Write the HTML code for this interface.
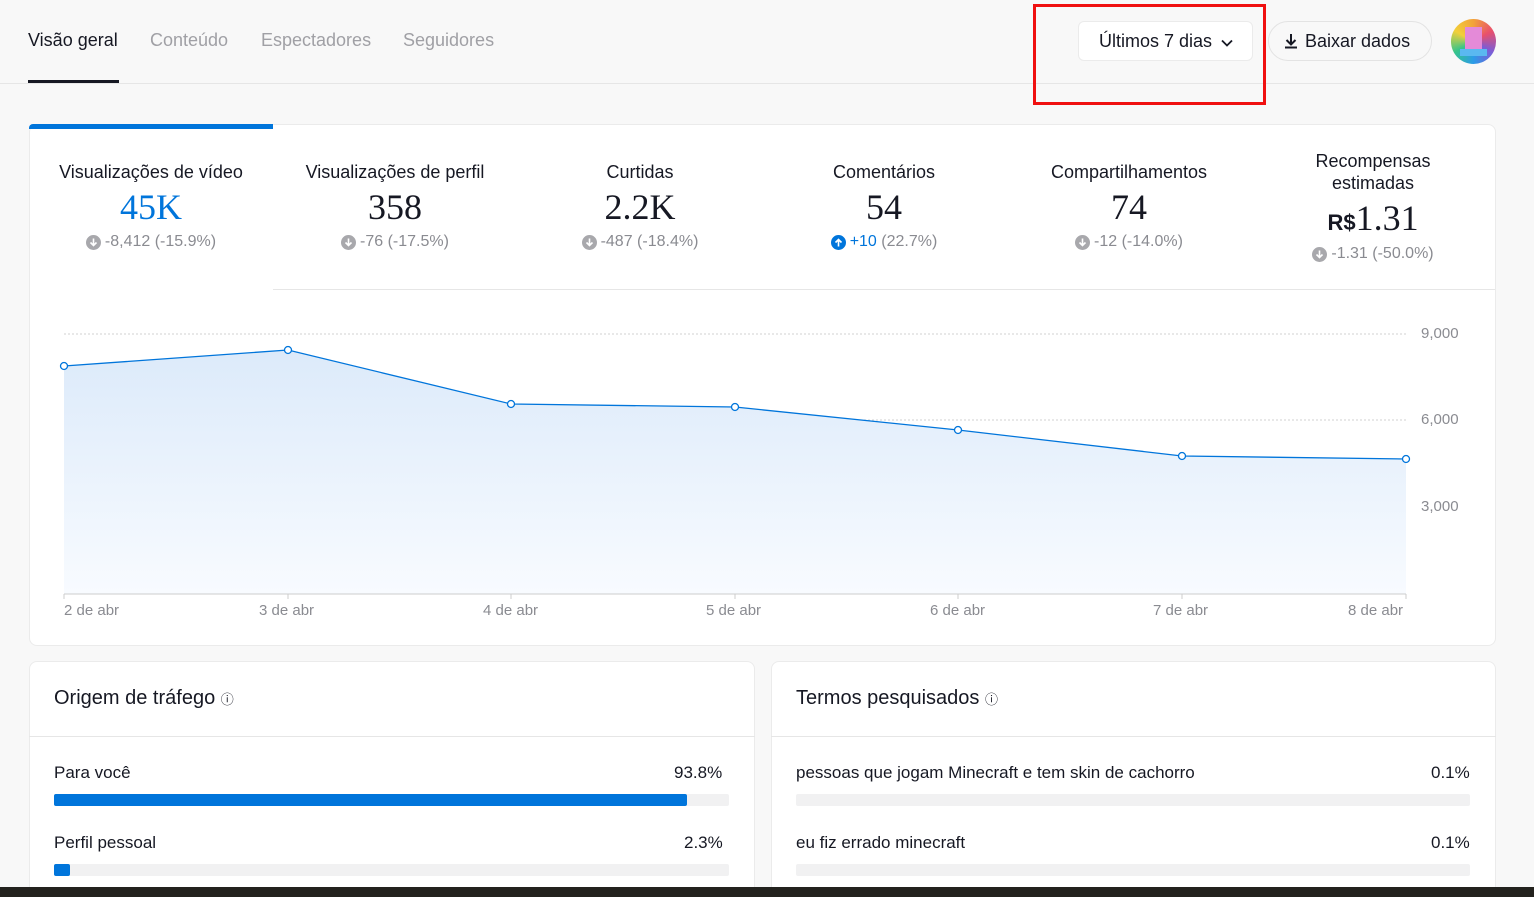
<!DOCTYPE html>
<html><head><meta charset="utf-8"><style>
*{box-sizing:border-box;margin:0;padding:0}
html,body{width:1534px;height:897px;overflow:hidden}
body{background:#f8f8f8;font-family:"Liberation Sans",sans-serif;color:#161823;position:relative}
.abs{position:absolute}
.tab{position:absolute;top:30px;font-size:18px;color:#a0a0a5}
.card{position:absolute;background:#fff;border:1px solid #ebebeb;border-radius:8px}
.m{position:absolute;text-align:center;width:244px}
.m .t{font-size:18px;color:#161823}
.m .v{font-family:"Liberation Serif",serif;font-size:36px;margin-top:4px;line-height:40px}
.m .d{font-size:16px;color:#8a8b91;margin-top:6px;display:flex;justify-content:center;align-items:center}
.ic{display:inline-block;width:15px;height:15px;border-radius:50%;background:#a8a8ac;margin-right:4px;position:relative}
.ic svg{position:absolute;left:0;top:0}
.xl{position:absolute;top:602px;font-size:15px;color:#8a8b91}
.yl{position:absolute;left:1421px;font-size:15px;color:#8a8b91}
.row{position:absolute;font-size:17px}
.bar{position:absolute;height:12px;background:#f1f1f2;border-radius:2px}
.bar i{display:block;height:12px;background:#0075db;border-radius:2px}
</style></head><body>
<div class="tab" style="left:28px;color:#161823">Visão geral</div>
<div class="tab" style="left:150px">Conteúdo</div>
<div class="tab" style="left:261px">Espectadores</div>
<div class="tab" style="left:403px">Seguidores</div>
<div class="abs" style="left:28px;top:80px;width:91px;height:3px;background:#161823"></div>
<div class="abs" style="left:0;top:83px;width:1534px;height:1px;background:#e6e6e6"></div>

<div class="abs" style="left:1078px;top:21px;width:175px;height:40px;background:#fff;border:1px solid #ebebeb;border-radius:6px;font-size:18px;line-height:38px;padding-left:20px">Últimos 7 dias <svg width="12" height="8" viewBox="0 0 12 8" style="margin-left:4px"><path d="M1 1.5l5 5 5-5" fill="none" stroke="#161823" stroke-width="1.8"/></svg></div>
<div class="abs" style="left:1033px;top:4px;width:233px;height:101px;border:3px solid #f01010"></div>
<div class="abs" style="left:1268px;top:21px;width:164px;height:40px;border:1px solid #e3e3e3;border-radius:20px;font-size:18px;line-height:38px;padding-left:14px"><svg width="16" height="16" viewBox="0 0 16 16" style="vertical-align:-2px;margin-right:6px"><path d="M8 1v10M3.5 7L8 11.5 12.5 7M2 14.5h12" fill="none" stroke="#161823" stroke-width="2"/></svg>Baixar dados</div>
<div class="abs" style="left:1451px;top:19px;width:45px;height:45px;border-radius:50%;overflow:hidden;background:conic-gradient(#f2a23a,#e94f6c,#7c5cd6,#2b9be8,#36c48a,#f2d03a,#f2a23a)"><div style="position:absolute;left:14px;top:8px;width:17px;height:24px;background:#e48ad8"></div><div style="position:absolute;left:9px;top:30px;width:27px;height:7px;background:#5ab8f0"></div></div>

<div class="card" style="left:29px;top:124px;width:1467px;height:522px"></div>
<div class="abs" style="left:29px;top:124px;width:244px;height:5px;background:#0075db;border-radius:4px 0 0 0"></div>
<div class="abs" style="left:273px;top:289px;width:1222px;height:1px;background:#e6e6e6"></div>

<div class="m" style="left:29px;top:162px"><div class="t">Visualizações de vídeo</div><div class="v" style="color:#0075db">45K</div><div class="d"><span class="ic"><svg width="15" height="15"><path d="M7.5 3.5v7M4.5 7.5l3 3 3-3" fill="none" stroke="#fff" stroke-width="1.6"/></svg></span>-8,412 (-15.9%)</div></div>
<div class="m" style="left:273px;top:162px"><div class="t">Visualizações de perfil</div><div class="v">358</div><div class="d"><span class="ic"><svg width="15" height="15"><path d="M7.5 3.5v7M4.5 7.5l3 3 3-3" fill="none" stroke="#fff" stroke-width="1.6"/></svg></span>-76 (-17.5%)</div></div>
<div class="m" style="left:518px;top:162px"><div class="t">Curtidas</div><div class="v">2.2K</div><div class="d"><span class="ic"><svg width="15" height="15"><path d="M7.5 3.5v7M4.5 7.5l3 3 3-3" fill="none" stroke="#fff" stroke-width="1.6"/></svg></span>-487 (-18.4%)</div></div>
<div class="m" style="left:762px;top:162px"><div class="t">Comentários</div><div class="v">54</div><div class="d"><span class="ic" style="background:#0075db"><svg width="15" height="15"><path d="M7.5 11.5v-7M4.5 7.5l3-3 3 3" fill="none" stroke="#fff" stroke-width="1.6"/></svg></span><span style="color:#0075db">+10</span>&nbsp;(22.7%)</div></div>
<div class="m" style="left:1007px;top:162px"><div class="t">Compartilhamentos</div><div class="v">74</div><div class="d"><span class="ic"><svg width="15" height="15"><path d="M7.5 3.5v7M4.5 7.5l3 3 3-3" fill="none" stroke="#fff" stroke-width="1.6"/></svg></span>-12 (-14.0%)</div></div>
<div class="m" style="left:1251px;top:150px"><div class="t" style="line-height:22px">Recompensas<br>estimadas</div><div class="v" style="margin-top:4px"><span style="font-family:'Liberation Sans',sans-serif;font-size:22px;font-weight:bold">R$</span>1.31</div><div class="d" style="margin-top:2px"><span class="ic"><svg width="15" height="15"><path d="M7.5 3.5v7M4.5 7.5l3 3 3-3" fill="none" stroke="#fff" stroke-width="1.6"/></svg></span>-1.31 (-50.0%)</div></div>

<svg class="abs" style="left:0;top:0" width="1534" height="640">
<defs><linearGradient id="g" x1="0" y1="0" x2="0" y2="1"><stop offset="0" stop-color="#dceafa"/><stop offset="1" stop-color="#f8fbff"/></linearGradient></defs>
<g stroke="#d0d0d0" stroke-dasharray="2 2"><line x1="64" y1="334" x2="1406" y2="334"/><line x1="64" y1="420" x2="1406" y2="420"/><line x1="64" y1="507" x2="1406" y2="507"/></g>
<path d="M64 366L288 350L511 404L735 407L958 430L1182 456L1406 459L1406 594L64 594Z" fill="url(#g)"/>
<line x1="64" y1="594" x2="1406" y2="594" stroke="#ccc"/>
<g stroke="#ccc"><line x1="64" y1="594" x2="64" y2="599"/><line x1="288" y1="594" x2="288" y2="599"/><line x1="511" y1="594" x2="511" y2="599"/><line x1="735" y1="594" x2="735" y2="599"/><line x1="958" y1="594" x2="958" y2="599"/><line x1="1182" y1="594" x2="1182" y2="599"/><line x1="1406" y1="594" x2="1406" y2="599"/></g>
<path d="M64 366L288 350L511 404L735 407L958 430L1182 456L1406 459" fill="none" stroke="#0075db" stroke-width="1.3"/>
<g fill="#fff" stroke="#0075db" stroke-width="1.3"><circle cx="64" cy="366" r="3.5"/><circle cx="288" cy="350" r="3.5"/><circle cx="511" cy="404" r="3.5"/><circle cx="735" cy="407" r="3.5"/><circle cx="958" cy="430" r="3.5"/><circle cx="1182" cy="456" r="3.5"/><circle cx="1406" cy="459" r="3.5"/></g>
</svg>
<div class="yl" style="top:325px">9,000</div><div class="yl" style="top:411px">6,000</div><div class="yl" style="top:498px">3,000</div>
<div class="xl" style="left:64px">2 de abr</div><div class="xl" style="left:259px">3 de abr</div><div class="xl" style="left:483px">4 de abr</div><div class="xl" style="left:706px">5 de abr</div><div class="xl" style="left:930px">6 de abr</div><div class="xl" style="left:1153px">7 de abr</div><div class="xl" style="left:1348px">8 de abr</div>

<div class="card" style="left:29px;top:661px;width:726px;height:260px"></div>
<div class="card" style="left:771px;top:661px;width:725px;height:260px"></div>
<div class="abs" style="left:29px;top:736px;width:726px;height:1px;background:#e6e6e6"></div>
<div class="abs" style="left:771px;top:736px;width:725px;height:1px;background:#e6e6e6"></div>
<div class="row" style="left:54px;top:687px;font-size:20px">Origem de tráfego <span style="font-size:13px">ⓘ</span></div>
<div class="row" style="left:796px;top:687px;font-size:20px">Termos pesquisados <span style="font-size:13px">ⓘ</span></div>

<div class="row" style="left:54px;top:763px">Para você</div><div class="row" style="left:674px;top:763px">93.8%</div>
<div class="bar" style="left:54px;top:794px;width:675px"><i style="width:633px"></i></div>
<div class="row" style="left:54px;top:833px">Perfil pessoal</div><div class="row" style="left:684px;top:833px">2.3%</div>
<div class="bar" style="left:54px;top:864px;width:675px"><i style="width:16px"></i></div>

<div class="row" style="left:796px;top:763px">pessoas que jogam Minecraft e tem skin de cachorro</div><div class="row" style="left:1431px;top:763px">0.1%</div>
<div class="bar" style="left:796px;top:794px;width:674px"></div>
<div class="row" style="left:796px;top:833px">eu fiz errado minecraft</div><div class="row" style="left:1431px;top:833px">0.1%</div>
<div class="bar" style="left:796px;top:864px;width:674px"></div>

<div class="abs" style="left:0;top:887px;width:1534px;height:10px;background:#23221e"></div>
</body></html>
